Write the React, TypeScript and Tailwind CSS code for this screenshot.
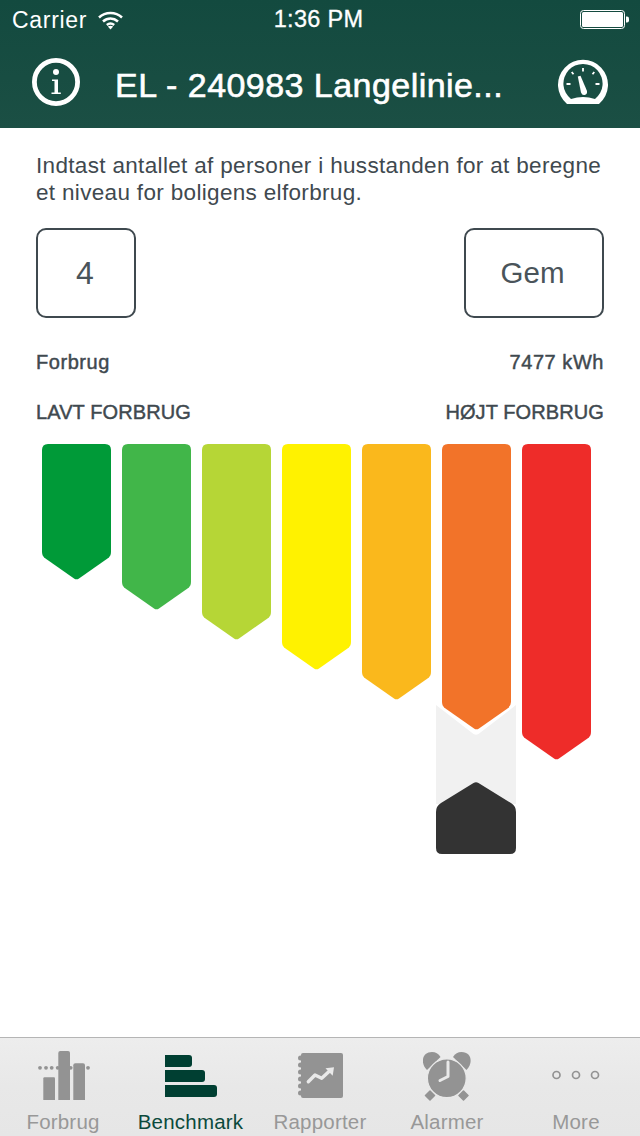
import React from "react";

const BARS = [
  { color: "#009a38", height: 136 },
  { color: "#41b649", height: 166 },
  { color: "#b6d636", height: 196 },
  { color: "#fff200", height: 226 },
  { color: "#fab81c", height: 256 },
  { color: "#f27329", height: 286 },
  { color: "#ee2c29", height: 316 },
];

function barPath(h: number) {
  return `M0 6Q0 0 6 0H63Q69 0 69 6V${h - 28}Q69 ${h - 24} 65.5 ${h - 21.5}L37 ${h - 1.5}Q34.5 ${h + 0.2} 32 ${h - 1.5}L3.5 ${h - 21.5}Q0 ${h - 24} 0 ${h - 28}Z`;
}

function LevelBar({ color, height }: { color: string; height: number }) {
  return (
    <svg width="69" height={height} viewBox={`0 0 69 ${height}`} className="block">
      <path d={barPath(height)} fill={color} />
    </svg>
  );
}

// Track and dark pointer under the bar the household falls in
function Marker() {
  return (
    <svg width="80" height="150" viewBox="0 0 80 150" className="block">
      <path d="M0 1L37.5 30Q40 31.5 42.5 30L80 1V100H0Z" fill="#f1f1f1" />
      <path
        d="M5 99L37.5 79Q40 77.5 42.5 79L75 99Q80 102 80 108V144Q80 150 74 150H6Q0 150 0 144V108Q0 102 5 99Z"
        fill="#333333"
      />
    </svg>
  );
}

function InfoIcon() {
  return (
    <svg width="48" height="48" viewBox="0 0 48 48" className="block">
      <circle cx="24" cy="24" r="21.6" fill="none" stroke="#fff" strokeWidth="4.8" />
      <circle cx="24" cy="14" r="3" fill="#fff" />
      <path d="M20 21.5H26V34.5H28.8V36H19.5V34.5H22.5V23H20Z" fill="#fff" />
    </svg>
  );
}

function GaugeIcon() {
  return (
    <svg width="50" height="45" viewBox="0 0 50 45" className="block">
      <path
        fillRule="evenodd"
        d="M9 45A25 25 0 1 1 41 45ZM13 40A19.6 19.6 0 1 1 37 40Q25 36 13 40Z"
        fill="#fff"
      />
      <path d="M19.8 17.5L22.5 16.7L29 32Q29.5 35.5 26.5 36Q24 36.4 23 33.5Z" fill="#fff" />
      <path
        d="M25 9V12.5M13.7 13L15.5 15.2M36.3 13L34.5 15.2M8.5 25H12.5M37.5 25H41.5"
        stroke="#fff"
        strokeWidth="1.8"
        fill="none"
      />
    </svg>
  );
}

function WifiIcon() {
  return (
    <svg width="25" height="19" viewBox="0 0 25 19" className="block">
      <path d="M1 6.5C7.5 0.5 17.5 0.5 24 6.5" fill="none" stroke="#fff" strokeWidth="2.5" />
      <path d="M5 10.5C9.5 6.5 15.5 6.5 20 10.5" fill="none" stroke="#fff" strokeWidth="2.5" />
      <path d="M8.8 14C11 12.2 14 12.2 16.2 14" fill="none" stroke="#fff" strokeWidth="2.5" />
      <path d="M9.8 15.5L12.5 18.5L15.2 15.5Q12.5 13.8 9.8 15.5Z" fill="#fff" />
    </svg>
  );
}

function BatteryIcon() {
  return (
    <svg width="49" height="20" viewBox="0 0 49 20" className="block">
      <rect x="0.5" y="0.5" width="44" height="18" rx="3" fill="none" stroke="#fff" strokeWidth="1" />
      <rect x="2" y="2" width="41" height="15" rx="1.5" fill="#fff" />
      <path d="M46 6.5H47Q49 6.5 49 8.5V10.5Q49 12.5 47 12.5H46Z" fill="#fff" />
    </svg>
  );
}

function ForbrugIcon() {
  return (
    <svg width="52" height="49" viewBox="0 0 52 49" className="block" fill="#939393">
      {[2, 8, 13.7, 19.7, 26, 32.7, 50].map((x) => (
        <circle key={x} cx={x} cy="16.8" r="1.9" />
      ))}
      <path d="M5.3 27.5Q5.3 26.3 6.5 26.3H16Q17 26.3 17 27.5V49H5.3Z" />
      <path d="M20.3 2Q20.3 0 22.3 0H30Q32 0 32 2V49H20.3Z" />
      <path d="M35.3 14.3Q35.3 12.3 37.3 12.3H45Q47 12.3 47 14.3V49H35.3Z" />
    </svg>
  );
}

function BenchmarkIcon() {
  return (
    <svg width="52" height="42" viewBox="0 0 52 42" className="block" fill="#003f32">
      <path d="M0 0H24Q27 0 27 3V9Q27 12 24 12H0Z" />
      <path d="M0 15H37Q40 15 40 18V24Q40 27 37 27H0Z" />
      <path d="M0 30H49Q52 30 52 33V39Q52 42 49 42H0Z" />
    </svg>
  );
}

function RapporterIcon() {
  return (
    <svg width="46" height="46" viewBox="0 0 46 46" className="block">
      <path d="M4 2Q4 0 6 0H44Q46 0 46 2V43Q46 45 44 45H6Q4 45 4 43Z" fill="#939393" />
      {[5, 12, 19, 26, 33, 40].map((y) => (
        <circle key={y} cx="3.5" cy={y} r="2.5" fill="#939393" />
      ))}
      <path
        d="M11.3 28.7L18 22L24.7 25.3L32 18.5"
        fill="none"
        stroke="#e9e9e9"
        strokeWidth="3.4"
        strokeLinecap="round"
        strokeLinejoin="round"
      />
      <path d="M28.5 15.3L37 14.3L35.7 22.7Z" fill="#e9e9e9" />
    </svg>
  );
}

function AlarmIcon() {
  return (
    <svg width="48" height="49" viewBox="0 0 48 49" className="block" fill="#939393">
      <path d="M4 18C-3 11 -1 0 9 0C12.5 0 15.5 1.5 17.5 5Z" />
      <path d="M43.5 18C50.5 11 48.5 0 38.5 0C35 0 32 1.5 30 5Z" />
      <circle cx="23.8" cy="26.3" r="19.4" stroke="#e9e9e9" strokeWidth="1.2" />
      <path d="M7 39L11.5 43.5L7 48L2.5 43.5Z" stroke="#939393" strokeWidth="1.5" strokeLinejoin="round" />
      <path d="M40.5 39L45 43.5L40.5 48L36 43.5Z" stroke="#939393" strokeWidth="1.5" strokeLinejoin="round" />
      <path
        d="M25 10V24.5L17 28.5"
        fill="none"
        stroke="#e9e9e9"
        strokeWidth="3"
        strokeLinecap="round"
        strokeLinejoin="round"
      />
    </svg>
  );
}

function MoreIcon() {
  return (
    <svg width="48" height="12" viewBox="0 0 48 12" className="block" fill="none" stroke="#939393" strokeWidth="1.7">
      <circle cx="4.5" cy="6" r="3.5" />
      <circle cx="24" cy="6" r="3.5" />
      <circle cx="43" cy="6" r="3.5" />
    </svg>
  );
}

const TABS = [
  { label: "Forbrug", icon: <ForbrugIcon />, active: false, slot: "pt-[13px]", text: "pr-[2px]" },
  { label: "Benchmark", icon: <BenchmarkIcon />, active: true, slot: "pt-[17px] pr-[2px]", text: "pr-[3px]" },
  { label: "Rapporter", icon: <RapporterIcon />, active: false, slot: "pt-[15px]", text: "" },
  { label: "Alarmer", icon: <AlarmIcon />, active: false, slot: "pt-[14px] pr-[2px]", text: "pr-[2px]" },
  { label: "More", icon: <MoreIcon />, active: false, slot: "pt-[31px]", text: "" },
];

export default function App() {
  return (
    <div className="flex h-[1136px] w-[640px] flex-col overflow-hidden bg-white font-['Liberation_Sans',Arial,sans-serif] text-[#3f494f]">
      <header className="flex h-[128px] shrink-0 flex-col bg-gradient-to-b from-[#134a3f] to-[#1b4f44] text-white">
        <div className="flex h-[40px] items-center justify-between pl-[12px] pr-[11px]">
          <div className="flex w-[200px] items-center gap-[11px]">
            <span className="text-[23px] leading-none tracking-[0.7px]">Carrier</span>
            <WifiIcon />
          </div>
          <span className="mr-[4px] text-[23.5px] leading-none tracking-[0.3px] [-webkit-text-stroke:0.3px_white]">1:36 PM</span>
          <div className="flex w-[200px] justify-end">
            <BatteryIcon />
          </div>
        </div>
        <div className="flex h-[88px] items-start pl-[32px] pr-[32px] pt-[18px]">
          <InfoIcon />
          <h1 className="ml-[35px] mt-[3px] text-[34px] leading-[48px] tracking-[0.45px] [-webkit-text-stroke:0.6px_white]">
            EL - 240983 Langelinie...
          </h1>
          <div className="ml-auto pt-[1px]">
            <GaugeIcon />
          </div>
        </div>
      </header>

      <main className="flex min-h-0 flex-1 flex-col px-[36px]">
        <p className="mt-[24px] text-[22.5px] leading-[27px] tracking-[0.33px]">
          Indtast antallet af personer i husstanden for at beregne
          <br />
          et niveau for boligens elforbrug.
        </p>

        <div className="mt-[22px] flex justify-between text-[#4a545a]">
          <div className="flex h-[90px] w-[100px] items-center justify-center rounded-[10px] border-2 border-[#3f494f] pr-[2px] text-[32px]">
            4
          </div>
          <div className="flex h-[90px] w-[140px] items-center justify-center rounded-[10px] border-2 border-[#3f494f] pr-[3px] text-[29.5px]">
            Gem
          </div>
        </div>

        <div className="mt-[32px] flex justify-between text-[20px] leading-[24px] tracking-[0.55px] [-webkit-text-stroke:0.45px_#3f494f]">
          <span>Forbrug</span>
          <span>7477 kWh</span>
        </div>
        <div className="mt-[26px] flex justify-between text-[20px] leading-[24px] tracking-[0.1px] [-webkit-text-stroke:0.45px_#3f494f]">
          <span>LAVT FORBRUG</span>
          <span>HØJT FORBRUG</span>
        </div>

        <div className="mt-[20px] flex items-start gap-[11px] pl-[6px]">
          {BARS.map((bar, i) => (
            <div key={bar.color} className="relative w-[69px]">
              {i === 5 && (
                <div className="absolute left-[-6px] top-[260px]">
                  <Marker />
                </div>
              )}
              <div className="relative">
                <LevelBar color={bar.color} height={bar.height} />
              </div>
            </div>
          ))}
        </div>
      </main>

      <nav className="flex h-[99px] shrink-0 border-t border-[#b5b5b5] bg-gradient-to-b from-[#ededed] via-[#e8e8e8] to-[#e6e6e6]">
        {TABS.map((tab) => (
          <div key={tab.label} className="flex w-[128px] flex-col items-center">
            <div className={`flex h-[72px] w-full justify-center ${tab.slot}`}>{tab.icon}</div>
            <span
              className={`text-[20.5px] leading-[24px] tracking-[0.2px] ${tab.text} ${tab.active ? "text-[#0b4a3c]" : "text-[#989898]"}`}
            >
              {tab.label}
            </span>
          </div>
        ))}
      </nav>
    </div>
  );
}
